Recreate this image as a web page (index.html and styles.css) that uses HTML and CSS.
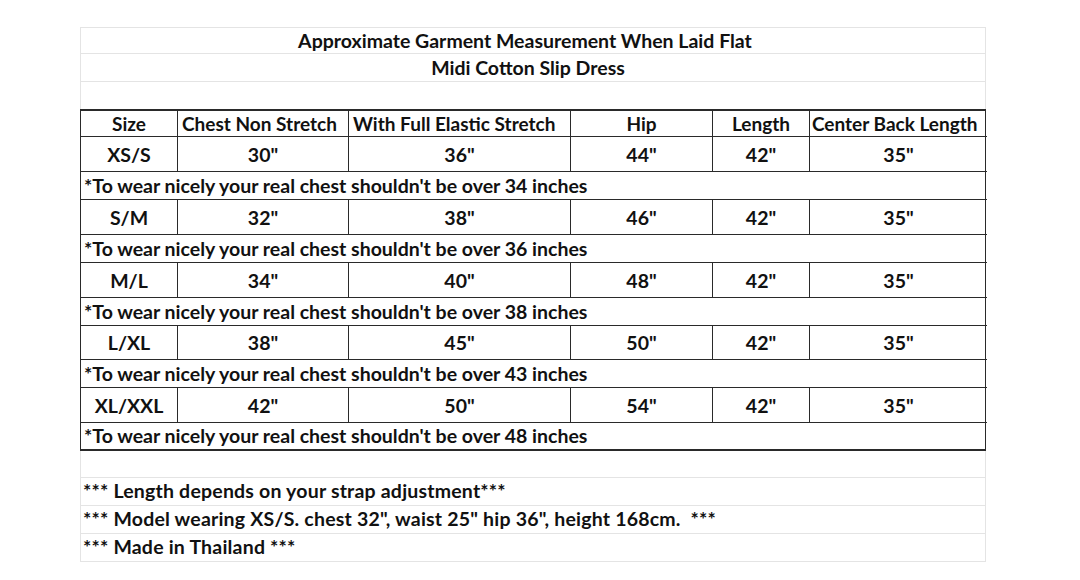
FILE: index.html
```html
<!DOCTYPE html>
<html>
<head>
<meta charset="utf-8">
<link rel="stylesheet" href="styles.css">
</head>
<body>
<div class="sheet">
  <div class="lrow t1"><span class="title">Approximate Garment Measurement When Laid Flat</span></div>
  <div class="lrow t2"><span class="title">Midi Cotton Slip Dress</span></div>
  <div class="lrow t3"></div>
  <div class="grid">
    <div class="c hd">Size</div>
    <div class="c hd left">Chest Non Stretch</div>
    <div class="c hd left">With Full Elastic Stretch</div>
    <div class="c hd">Hip</div>
    <div class="c hd">Length</div>
    <div class="c hd left last">Center Back Length</div>

    <div class="c dt">XS/S</div><div class="c dt">30"</div><div class="c dt">36"</div><div class="c dt">44"</div><div class="c dt">42"</div><div class="c dt last">35"</div>
    <div class="note">*To wear nicely your real chest shouldn't be over 34 inches</div>

    <div class="c dt">S/M</div><div class="c dt">32"</div><div class="c dt">38"</div><div class="c dt">46"</div><div class="c dt">42"</div><div class="c dt last">35"</div>
    <div class="note">*To wear nicely your real chest shouldn't be over 36 inches</div>

    <div class="c dt">M/L</div><div class="c dt">34"</div><div class="c dt">40"</div><div class="c dt">48"</div><div class="c dt">42"</div><div class="c dt last">35"</div>
    <div class="note">*To wear nicely your real chest shouldn't be over 38 inches</div>

    <div class="c dt short">L/XL</div><div class="c dt short">38"</div><div class="c dt short">45"</div><div class="c dt short">50"</div><div class="c dt short">42"</div><div class="c dt short last">35"</div>
    <div class="note">*To wear nicely your real chest shouldn't be over 43 inches</div>

    <div class="c dt">XL/XXL</div><div class="c dt">42"</div><div class="c dt">50"</div><div class="c dt">54"</div><div class="c dt">42"</div><div class="c dt last">35"</div>
    <div class="note">*To wear nicely your real chest shouldn't be over 48 inches</div>
  </div>
  <div class="lrow empty"></div>
  <div class="lrow foot">*** Length depends on your strap adjustment***</div>
  <div class="lrow foot">*** Model wearing XS/S. chest 32", waist 25" hip 36", height 168cm.&nbsp; ***</div>
  <div class="lrow foot">*** Made in Thailand ***</div>
</div>
</body>
</html>
```

FILE: styles.css
```css
* { box-sizing: border-box; }
html, body { margin: 0; padding: 0; background: #ffffff; }
body {
  font-family: Lato, "Liberation Sans", sans-serif;
  font-weight: 700;
  font-size: 19.5px;
  color: #111111;
}
.sheet {
  width: 906px;
  margin: 27px 0 0 80px;
}
.lrow {
  height: 28px;
  border: 1px solid #e4e4e4;
  border-top: none;
  display: flex;
  align-items: center;
  padding: 0 0 0 2px;
  white-space: nowrap;
}
.t1 { border-top: 1px solid #e4e4e4; height: 27px; justify-content: center; padding: 0 16px 0 0; }
.t2 { justify-content: center; padding: 0 10px 0 0; }
.t3 { border-bottom: none; height: 27px; }
.empty { height: 27px; border-top: none; }
.foot { padding-bottom: 2px; letter-spacing: 0.2px; }
.grid {
  display: grid;
  grid-template-columns: 97px 171px 222px 142px 97px 177px;
  border: 1px solid #2a2a2a;
  border-top-width: 2px;
  border-bottom-width: 2px;
}
.c {
  border-right: 1px solid #2a2a2a;
  border-bottom: 1px solid #2a2a2a;
  display: flex;
  align-items: center;
  justify-content: center;
  white-space: nowrap;
}
.c.last { border-right: none; }
.c.left { justify-content: flex-start; padding-left: 4px; }
.hd { height: 26px; font-size: 19px; }
.hd.last { padding-left: 2px; }
.dt { height: 35px; }
.dt.short { height: 34px; }
.note {
  grid-column: 1 / -1;
  height: 28px;
  border-bottom: 1px solid #2a2a2a;
  display: flex;
  align-items: center;
  padding: 0 0 1px 3px;
  white-space: nowrap;
}
.note:last-child { border-bottom: none; height: 26px; }
```
